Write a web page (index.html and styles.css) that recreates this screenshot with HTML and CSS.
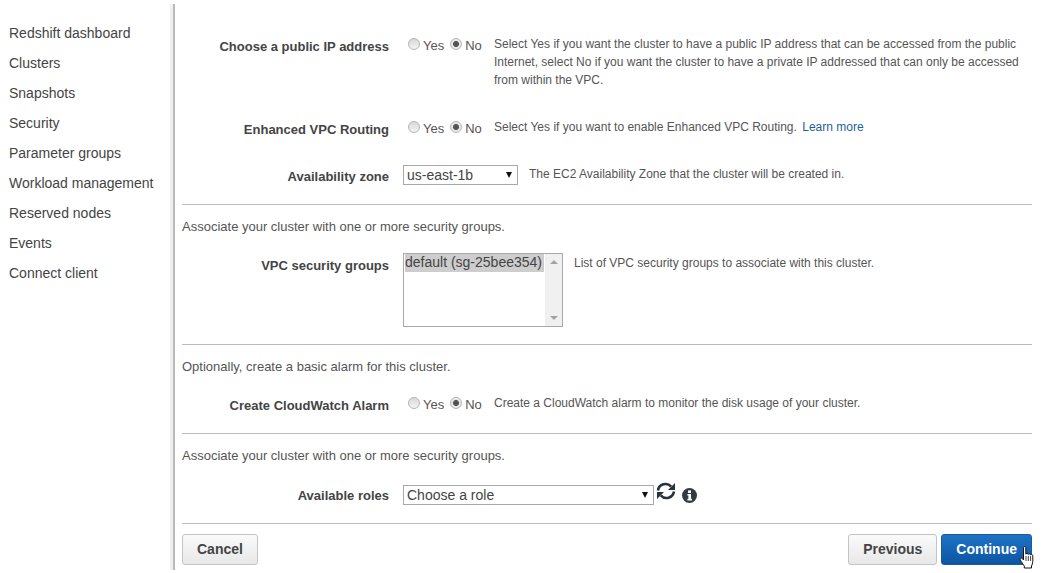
FILE: index.html
```html
<!DOCTYPE html>
<html lang="en">
<head>
    <meta charset="UTF-8">
    <title>Redshift - Launch cluster</title>
    <link rel="stylesheet" href="styles.css">
</head>
<body>
    <div class="page">
        <nav class="sidebar">
            <a href="#">Redshift dashboard</a>
            <a href="#">Clusters</a>
            <a href="#">Snapshots</a>
            <a href="#">Security</a>
            <a href="#">Parameter groups</a>
            <a href="#">Workload management</a>
            <a href="#">Reserved nodes</a>
            <a href="#">Events</a>
            <a href="#">Connect client</a>
        </nav>

        <main class="content">
            <div class="row row-ip">
                <label class="row-label">Choose a public IP address</label>
                <div class="radios">
                    <label><input type="radio" name="publicIp"> Yes</label>
                    <label><input type="radio" name="publicIp" checked> No</label>
                </div>
                <p class="help">Select Yes if you want the cluster to have a public IP address that can be accessed from the public Internet, select No if you want the cluster to have a private IP addressed that can only be accessed from within the VPC.</p>
            </div>

            <div class="row row-routing">
                <label class="row-label">Enhanced VPC Routing</label>
                <div class="radios">
                    <label><input type="radio" name="routing"> Yes</label>
                    <label><input type="radio" name="routing" checked> No</label>
                </div>
                <p class="help">Select Yes if you want to enable Enhanced VPC Routing. <a href="#">Learn more</a></p>
            </div>

            <div class="row row-zone">
                <label class="row-label" for="zone">Availability zone</label>
                <div class="select-wrap select-zone">
                    <select id="zone"><option>us-east-1b</option></select>
                </div>
                <p class="help">The EC2 Availability Zone that the cluster will be created in.</p>
            </div>

            <hr>
            <p class="section-note">Associate your cluster with one or more security groups.</p>

            <div class="row row-groups">
                <label class="row-label">VPC security groups</label>
                <div class="listbox">
                    <div class="listbox-items">
                        <div class="listbox-selected">default (sg-25bee354)</div>
                    </div>
                    <div class="listbox-track">
                        <span class="arrow-up"></span>
                        <span class="arrow-down"></span>
                    </div>
                </div>
                <p class="help">List of VPC security groups to associate with this cluster.</p>
            </div>

            <hr>
            <p class="section-note">Optionally, create a basic alarm for this cluster.</p>

            <div class="row row-alarm">
                <label class="row-label">Create CloudWatch Alarm</label>
                <div class="radios">
                    <label><input type="radio" name="alarm"> Yes</label>
                    <label><input type="radio" name="alarm" checked> No</label>
                </div>
                <p class="help">Create a CloudWatch alarm to monitor the disk usage of your cluster.</p>
            </div>

            <hr>
            <p class="section-note">Associate your cluster with one or more security groups.</p>

            <div class="row row-roles">
                <label class="row-label" for="role">Available roles</label>
                <div class="select-wrap select-role">
                    <select id="role"><option>Choose a role</option></select>
                </div>
                <svg class="icon-refresh" width="22" height="18" viewBox="0 0 22 18">
                    <path d="M3 8.500A7.600 7.600 0 0 1 16.200 4.600" fill="none" stroke="#26333a" stroke-width="2.600"/>
                    <path d="M20 1V8h-7z" fill="#26333a"/>
                    <path d="M19 9.500A7.600 7.600 0 0 1 5.800 13.400" fill="none" stroke="#26333a" stroke-width="2.600"/>
                    <path d="M2 17V10h7z" fill="#26333a"/>
                </svg>
                <svg class="icon-info" width="15" height="15" viewBox="0 0 15 15">
                    <circle cx="7.500" cy="7.500" r="7.500" fill="#333c42"/>
                    <rect x="6" y="2.400" width="3" height="2.600" fill="#fff"/>
                    <path d="M5.400 6h3.600v4.800h1v1.600H5.400v-1.600h1V7.600h-1z" fill="#fff"/>
                </svg>
            </div>

            <hr>
            <div class="actions">
                <button class="btn" type="button">Cancel</button>
                <div class="actions-right">
                    <button class="btn" type="button">Previous</button>
                    <button class="btn btn-primary" type="button">Continue</button>
                    <svg class="cursor-hand" width="16" height="23" viewBox="0 0 16 23">
                        <path d="M4.500 1.600c0-1.300 2.300-1.300 2.300 0v6.600c.3-1.100 2.200-1.100 2.400.2.400-1 2.200-.8 2.300.5.500-.8 2.200-.5 2.300.9v5.600c0 2-.8 3.200-1.300 4.600v2H5.300v-2C4 18 2.700 16.500 1.200 13.700c-.7-1.400.9-2.500 2-1.300l1.300 1.500z" fill="#fff" stroke="#111" stroke-width="1"/>
                        <path d="M7 10v5M9.300 10v5M11.600 10v5" stroke="#111" stroke-width=".8" fill="none"/>
                    </svg>
                </div>
            </div>
        </main>
    </div>
</body>
</html>
```

FILE: styles.css
```css
* {
    box-sizing: border-box;
}
html, body {
    height: 100%;
}
body {
    margin: 0;
    overflow: hidden;
    background: #fff;
    color: #444;
    font-family: "Liberation Sans", Arial, sans-serif;
    font-size: 14px;
}
.page {
    display: flex;
    height: 573px;
}
.sidebar {
    display: flex;
    flex-direction: column;
    flex: none;
    width: 173px;
    padding: 18px 0 0 9px;
}
.sidebar a {
    height: 30px;
    line-height: 30px;
    color: #444;
    text-decoration: none;
}
.content {
    flex: none;
    width: 859px;
    height: 566px;
    margin-top: 4px;
    padding-left: 7px;
    border-left: 2px solid #bbb;
    box-shadow: -3px 0 0 #efefef;
    background: #fff;
}
.row {
    display: flex;
    align-items: flex-start;
}
.row-label {
    flex: none;
    width: 207px;
    margin: 1px 14px 0 0;
    text-align: right;
    font-size: 13px;
    font-weight: bold;
    line-height: 18px;
}
.radios {
    display: flex;
    flex: none;
    gap: 5px;
    width: 91px;
    padding-left: 4px;
    color: #555;
    font-size: 13px;
    line-height: 18px;
}
.radios label {
    display: flex;
    align-items: flex-start;
    gap: 3px;
}
.radios input {
    appearance: none;
    flex: none;
    width: 12px;
    height: 12px;
    margin: 1px 0 0 1px;
    border: 1px solid #b5b5b5;
    border-radius: 50%;
    background: linear-gradient(#d8d8d8, #f4f4f4);
}
.radios input:checked {
    background: radial-gradient(circle, #555 0, #555 2.6px, #e8e8e8 3.4px);
}
.help {
    margin: 0;
    font-size: 12px;
    line-height: 18px;
    color: #555;
}
.help a {
    margin-left: 2px;
    color: #1d5f9e;
    text-decoration: none;
}
.row-ip {
    height: 104px;
    padding-top: 33px;
}
.row-routing {
    height: 57px;
    padding-top: 12px;
}
.row-zone {
    height: 39px;
}
.row-ip .help,
.row-routing .help,
.row-alarm .help {
    margin-top: -2px;
}
.select-wrap {
    position: relative;
    flex: none;
    height: 20px;
}
.select-wrap select {
    appearance: none;
    display: block;
    width: 100%;
    height: 100%;
    padding: 0 0 0 3px;
    border: 1px solid #a9a9a9;
    border-radius: 0;
    background: #fff;
    color: #444;
    font: 14px "Liberation Sans", Arial, sans-serif;
}
.select-wrap::after {
    content: "";
    position: absolute;
    right: 6px;
    top: 7px;
    border-left: 3.5px solid transparent;
    border-right: 3.5px solid transparent;
    border-top: 6px solid #111;
}
.select-zone {
    width: 115px;
    margin-right: 11px;
}
.select-role {
    width: 251px;
}
.row-zone .row-label {
    padding-top: 2px;
}
.row-roles .row-label {
    margin-top: 0;
    padding-top: 2px;
}
hr {
    height: 1px;
    margin: 0;
    border: 0;
    background: #bbb;
}
.section-note {
    height: 22px;
    margin: 11px 0 0;
    line-height: 22px;
    color: #555;
    font-size: 13px;
}
.row-groups {
    height: 106px;
    padding-top: 15px;
}
.row-groups .row-label {
    margin-top: 4px;
}
.row-groups .help {
    margin-top: 1px;
}
.listbox {
    display: flex;
    flex: none;
    width: 160px;
    height: 74px;
    margin-right: 11px;
    border: 1px solid #a9a9a9;
}
.listbox-items {
    flex: 1;
    padding: 0 1px;
}
.listbox-selected {
    height: 18px;
    line-height: 17px;
    background: #cdcdcd;
    color: #444;
    white-space: nowrap;
}
.listbox-track {
    display: flex;
    flex: none;
    flex-direction: column;
    justify-content: space-between;
    align-items: center;
    width: 17px;
    padding: 6px 0;
    background: #f0f0f0;
}
.arrow-up {
    border-left: 4px solid transparent;
    border-right: 4px solid transparent;
    border-bottom: 4px solid #a3a3a3;
}
.arrow-down {
    border-left: 4px solid transparent;
    border-right: 4px solid transparent;
    border-top: 4px solid #a3a3a3;
}
.row-alarm {
    height: 55px;
    padding-top: 18px;
}
.row-roles {
    height: 56px;
    padding-top: 18px;
}
.icon-refresh {
    flex: none;
    margin: -3px 0 0 1px;
}
.icon-info {
    flex: none;
    margin: 3px 0 0 5px;
}
.actions {
    display: flex;
    justify-content: space-between;
    padding-top: 10px;
}
.actions-right {
    position: relative;
    display: flex;
    gap: 4px;
}
.btn {
    height: 31px;
    padding: 0 14px 2px;
    border: 1px solid #c4c4c4;
    border-radius: 3px;
    background: linear-gradient(#fafafa, #e8e8e8);
    color: #444;
    font: bold 14px "Liberation Sans", Arial, sans-serif;
}
.btn-primary {
    border-color: #1a5b9c;
    background: linear-gradient(#1f72c4, #0d55a3);
    color: #fff;
}
.cursor-hand {
    position: absolute;
    right: -3px;
    top: 12px;
}
```
